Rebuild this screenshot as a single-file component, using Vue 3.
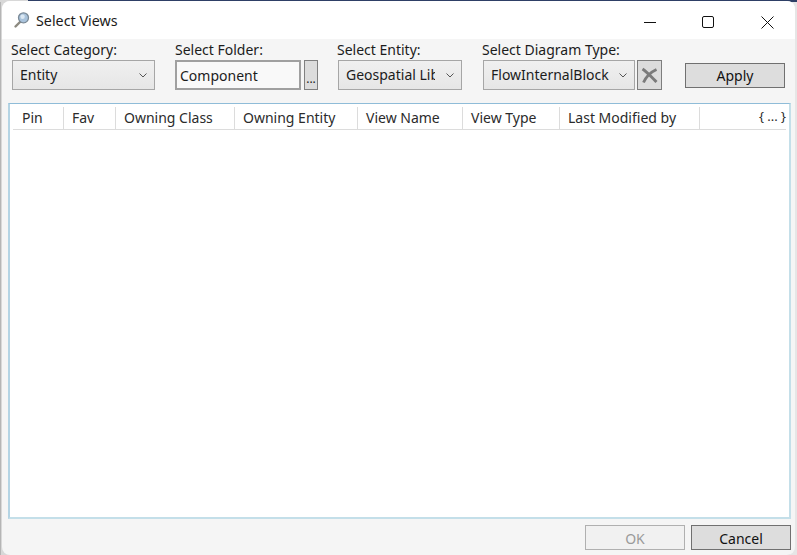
<script setup>
const columns = [
  { name: 'Pin', width: 51 },
  { name: 'Fav', width: 52 },
  { name: 'Owning Class', width: 119 },
  { name: 'Owning Entity', width: 123 },
  { name: 'View Name', width: 105 },
  { name: 'View Type', width: 97 },
  { name: 'Last Modified by', width: 140 },
]
</script>

<template>
  <div class="desktop">
    <div class="window">
      <header class="titlebar">
        <svg class="app-icon" width="18" height="18" viewBox="0 0 18 18">
          <path d="M7.5 10.5 L2.5 15.5" stroke="#8d8a80" stroke-width="2.4" stroke-linecap="round" />
          <circle cx="10.5" cy="6.8" r="5" fill="#a9c3dc" stroke="#7b8a97" stroke-width="1.3" />
          <circle cx="9.6" cy="5.8" r="2.2" fill="#dbe8f3" />
        </svg>
        <span class="title">Select Views</span>
        <div class="win-controls">
          <svg class="ctl" width="58" height="36" viewBox="0 0 58 36"><path d="M23 20.5h12" stroke="#111" stroke-width="1" /></svg>
          <svg class="ctl" width="58" height="36" viewBox="0 0 58 36"><rect x="23.5" y="14.5" width="11" height="11" rx="1.5" fill="none" stroke="#111" stroke-width="1" /></svg>
          <svg class="ctl ctl-close" width="58" height="36" viewBox="0 0 58 36"><path d="M23.5 14.5l12 12M35.5 14.5l-12 12" stroke="#111" stroke-width="1" /></svg>
        </div>
      </header>

      <main class="body">
        <section class="toolbar">
          <div class="field f-cat">
            <label>Select Category:</label>
            <div class="combo"><span class="combo-text">Entity</span><svg class="chev" width="8" height="5" viewBox="0 0 8 5"><path d="M.5.5L4 4 7.5.5" fill="none" stroke="#555" /></svg></div>
          </div>
          <div class="field f-folder">
            <label>Select Folder:</label>
            <div class="folder-row">
              <div class="textbox">Component</div>
              <button class="dots">...</button>
            </div>
          </div>
          <div class="field f-ent">
            <label>Select Entity:</label>
            <div class="combo"><span class="combo-text clip">Geospatial Library</span><svg class="chev" width="8" height="5" viewBox="0 0 8 5"><path d="M.5.5L4 4 7.5.5" fill="none" stroke="#555" /></svg></div>
          </div>
          <div class="field f-diag">
            <label>Select Diagram Type:</label>
            <div class="folder-row diag-row">
              <div class="combo diag-combo"><span class="combo-text">FlowInternalBlock</span><svg class="chev" width="8" height="5" viewBox="0 0 8 5"><path d="M.5.5L4 4 7.5.5" fill="none" stroke="#555" /></svg></div>
              <button class="clear">
                <svg width="17" height="17" viewBox="0 0 17 17"><path d="M1.5 2C6 5 11 10.5 15.5 15M15.5 2.500C10 5 5 10 2.500 15.500" fill="none" stroke="#7a7a7a" stroke-width="2.800" /></svg>
              </button>
            </div>
          </div>
          <button class="btn apply">Apply</button>
        </section>

        <section class="grid">
          <div class="grid-head">
            <div v-for="c in columns" :key="c.name" class="col" :style="{ width: c.width + 'px' }">{{ c.name }}</div>
            <div class="col-rest">{ ... }</div>
          </div>
        </section>

        <footer class="footer">
          <button class="btn disabled">OK</button>
          <button class="btn">Cancel</button>
        </footer>
      </main>
    </div>
  </div>
</template>

<style>
html, body { margin: 0; padding: 0; overflow: hidden; }
</style>

<style scoped>
.desktop {
  width: 797px;
  height: 555px;
  box-sizing: border-box;
  padding: 1px 2px 0 2px;
  background:
    linear-gradient(90deg, #d8d8d8 0 28px, #2e3f66 28px) top / 100% 2px no-repeat,
    linear-gradient(90deg, #b5b5b5 0 1px, #d8d8d8 1px 790px, #e6e6e6 790px);
  font-family: "Noto Sans", "Liberation Sans", sans-serif;
  font-size: 14px;
  color: #1c1c1c;
}
.window {
  height: 100%;
  display: flex;
  flex-direction: column;
  border-radius: 8px;
  overflow: hidden;
  background: #f5f5f5;
}
.titlebar {
  height: 38px;
  flex: none;
  background: #fff;
  display: flex;
  align-items: center;
  padding-left: 11px;
}
.app-icon { margin-right: 5px; }
.title { flex: 1; font-size: 14.3px; }
.win-controls { display: flex; margin-right: -1px; }
.ctl { display: block; }
.ctl-close { margin-left: 1px; }
.body {
  flex: 1;
  display: flex;
  flex-direction: column;
  padding: 0 4px 5px 6px;
  min-height: 0;
}
.toolbar {
  display: flex;
  align-items: flex-end;
  height: 51px;
  flex: none;
}
.field { display: flex; flex-direction: column; }
.field label { height: 21px; line-height: 21px; margin-left: -1px; white-space: nowrap; }
.f-cat { width: 143px; margin-left: 4px; margin-right: 20px; }
.f-folder { width: 143px; margin-right: 20px; }
.f-folder label { margin-left: 0; }
.f-ent { width: 124px; margin-right: 21px; }
.f-diag { width: 179px; margin-right: 23px; }
.combo {
  height: 30px;
  box-sizing: border-box;
  border: 1px solid #a6a6a6;
  background: linear-gradient(#f0f0f0, #e6e6e6);
  display: flex;
  align-items: center;
  padding: 0 7px 2px;
}
.combo-text { flex: 1; white-space: nowrap; overflow: hidden; }
.clip { max-width: 89px; flex: none; }
.chev { flex: none; margin-left: auto; margin-top: 2px; }
.folder-row { display: flex; }
.textbox {
  width: 126px;
  height: 30px;
  box-sizing: border-box;
  border: 2px solid #a0a0a0;
  background: #f9f9f9;
  line-height: 28px;
  padding-left: 3px;
}
.dots {
  width: 14px;
  height: 30px;
  margin-left: 3px;
  padding: 8px 0 0;
  border: 1px solid #808080;
  background: #dcdcdc;
  font: inherit;
  font-size: 12px;
  line-height: 1;
  color: #1c1c1c;
}
.diag-row { gap: 2px; }
.diag-combo { width: 152px; flex: none; }
.clear {
  width: 25px;
  height: 30px;
  flex: none;
  padding: 0;
  border: 1px solid #7d7d7d;
  background: #dcdcdc;
  display: flex;
  align-items: center;
  justify-content: center;
}
.btn {
  width: 100px;
  height: 25px;
  box-sizing: border-box;
  border: 1px solid #707070;
  background: #dddddd;
  font: inherit;
  color: #111;
  padding: 0;
}
.apply { margin-bottom: 2px; }
.grid {
  flex: 1;
  margin-top: 13px;
  border-style: solid;
  border-color: #8fbcd8 #c4dfe9 #c4dfe9 #b4d4e4;
  border-width: 1px 2px 2px 2px;
  background: #fff;
  padding: 3px 3px 0 3px;
  min-height: 0;
}
.grid-head {
  display: flex;
  height: 23px;
  box-sizing: border-box;
  border-bottom: 1px solid #dcdcdc;
  color: #2b2b2b;
}
.col {
  flex: none;
  box-sizing: border-box;
  border-right: 1px solid #dcdcdc;
  padding-left: 8px;
  line-height: 21px;
  white-space: nowrap;
}
.col:first-child { padding-left: 9px; }
.col-rest {
  flex: 1;
  text-align: right;
  line-height: 19px;
  font-size: 13px;
}
.footer {
  flex: none;
  display: flex;
  justify-content: flex-end;
  gap: 6px;
  padding-top: 6px;
}
.footer .btn { padding-top: 2px; }
.disabled {
  background: #f1f1f1;
  border-color: #b0b0b0;
  color: #9a9a9a;
}
</style>
